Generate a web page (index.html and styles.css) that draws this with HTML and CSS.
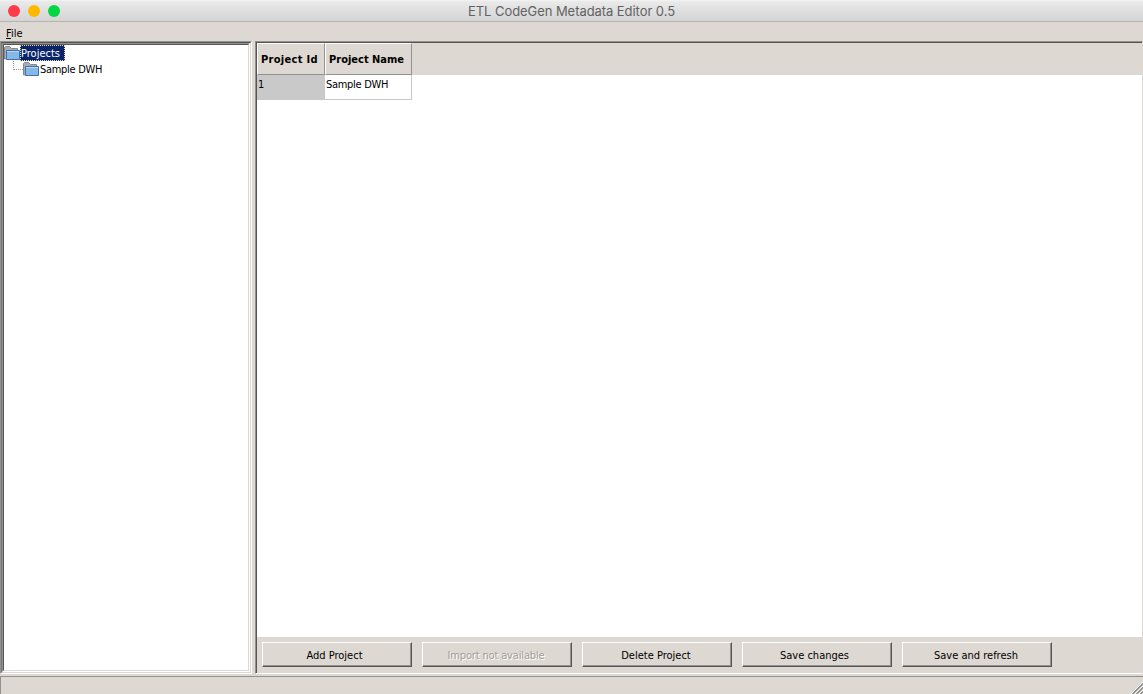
FILE: index.html
```html
<!DOCTYPE html>
<html lang="en">
<head>
<meta charset="utf-8">
<title>ETL CodeGen Metadata Editor 0.5</title>
<link rel="stylesheet" href="styles.css">
</head>
<body>
<div class="window">
  <header class="titlebar">
    <div class="lights"><i class="light close"></i><i class="light minimize"></i><i class="light zoom"></i></div>
    <span class="title">ETL CodeGen Metadata Editor 0.5</span>
  </header>
  <nav class="menubar"><span class="menu"><u>F</u>ile</span></nav>
  <main class="split">
    <aside class="tree">
      <div class="tree-frame">
        <div class="tree-well">
          <div class="tree-inner">
            <div class="node root">
              <svg class="folder" width="16" height="16" viewBox="0 0 16 16"><path d="M.5 14V2.500l1-1h4l2 2h6v9z" fill="#a9adb0" stroke="#85898d"/><path d="M2.500 5.500h13v9h-13z" fill="#86b8e6" stroke="#3c71ad"/><path d="M3 6.500h12" stroke="#b9d9f5"/></svg><span class="label selected">Projects</span>
            </div>
            <div class="node child">
              <svg class="branch" width="10" height="16" viewBox="0 0 10 16"><path d="M.5 0v9M1 8.500h9" fill="none" stroke="#999" stroke-dasharray="1 1"/></svg><svg class="folder" width="16" height="16" viewBox="0 0 16 16"><path d="M.5 14V2.500l1-1h4l2 2h6v9z" fill="#a9adb0" stroke="#85898d"/><path d="M2.500 5.500h13v9h-13z" fill="#86b8e6" stroke="#3c71ad"/><path d="M3 6.500h12" stroke="#b9d9f5"/></svg><span class="label sample">Sample DWH</span>
            </div>
          </div>
        </div>
      </div>
    </aside>
    <section class="panel">
      <div class="grid">
        <div class="head-row"><div class="th id">Project Id</div><div class="th name">Project Name</div></div>
        <div class="row"><div class="td id">1</div><div class="td name">Sample DWH</div></div>
      </div>
      <div class="actions">
        <button class="btn add">Add Project</button>
        <button class="btn import" disabled>Import not available</button>
        <button class="btn delete">Delete Project</button>
        <button class="btn save">Save changes</button>
        <button class="btn refresh">Save and refresh</button>
      </div>
    </section>
  </main>
  <footer class="statusbar"><svg class="grip" width="12" height="12" viewBox="0 0 12 12"><path d="M0 12 12 0M4 12l8-8M8 12l4-4" stroke="#fff" stroke-width="1"/><path d="M1.500 12 12 1.500M5.500 12 12 5.500M9.500 12 12 9.500" stroke="#888" stroke-width="1.400"/></svg></footer>
</div>
</body>
</html>
```
FILE: styles.css
```css
* { box-sizing: border-box; }
body { margin: 0; background: #ddd8d2; }
.window { width: 1143px; height: 694px; display: flex; flex-direction: column; overflow: hidden; background: #ddd8d2; color: #000; font: 11px/14px "DejaVu Sans Condensed", "DejaVu Sans", sans-serif; }
.titlebar { height: 22px; display: grid; grid-template-columns: 468px 1fr; align-items: center; background: linear-gradient(#f3f3f3 0, #e9e9e9 2px, #d4d4d4 100%); border-bottom: 1px solid #b5b3b3; }
.lights { display: flex; gap: 8px; padding-left: 8px; }
.light { width: 12px; height: 12px; border-radius: 50%; }
.close { background: #ff3b4a; }
.minimize { background: #ffb800; }
.zoom { background: #00d742; }
.title { font: 13px/18px Inter, sans-serif; color: #626262; letter-spacing: -0.06px; white-space: nowrap; }
.menubar { height: 19px; padding: 5px 6px 0; }
.split { height: 633px; display: flex; }
.tree { width: 252px; border: 1px solid; border-color: #929292 #fff #fff #929292; }
.tree-frame { height: 100%; border: 1px solid; border-color: #555 #ddd8d2 #ddd8d2 #777; }
.tree-well { height: 100%; border: 1px solid; border-color: #929292 #fff #fff #929292; }
.tree-inner { height: 100%; border: 1px solid; border-color: #555 #ddd8d2 #ddd8d2 #555; background: #fff; }
.node { height: 16px; display: flex; align-items: center; }
.child { padding-left: 9px; }
.folder { flex: none; }
.label { white-space: nowrap; line-height: 16px; padding-top: 1px; }
.sample { padding-left: 1px; letter-spacing: -0.3px; }
.selected { width: 45px; height: 16px; padding-left: 1px; color: #fff; background: #0a246a; outline: 1px dotted #f5db95; outline-offset: -1px; }
.panel { width: 888px; margin-left: 3px; border: 1px solid; border-color: #929292 #ddd8d2 #fff #929292; display: flex; flex-direction: column; }
.grid { height: 595px; background: #fff; border-top: 1px solid #555; border-left: 1px solid #555; }
.head-row { height: 32px; display: flex; background: #ddd8d2; }
.th { height: 32px; padding: 9px 3px 0; border: 1px solid; border-color: #fff #929292 #929292 #fff; font-weight: bold; white-space: nowrap; }
.th.id { letter-spacing: 0.3px; }
.id { width: 68px; }
.name { width: 87px; }
.row { display: flex; height: 25px; }
.td { padding: 3px 1px; border: 0 solid #c9c9c9; border-width: 0 1px 1px 0; white-space: nowrap; }
.td.name { letter-spacing: -0.3px; }
.td.id { background: #c9c9c9; }
.actions { flex: 1; display: flex; gap: 10px; padding: 5px 0 0 5px; border-left: 1px solid #555; }
.btn { width: 150px; height: 25px; padding: 2px 5px 0 0; color: #000; background: #ddd8d2; border: 1px solid; border-color: #fff #555 #555 #fff; box-shadow: inset -1px -1px #929292; font: inherit; }
.import, .delete, .refresh { padding-right: 2px; }
.import { letter-spacing: -0.15px; }
.btn:disabled { color: #a09d99; text-shadow: 1px 1px #fff; }
.statusbar { flex: 1; margin-top: 2px; border-top: 1px solid #929292; border-left: 1px solid #929292; display: flex; justify-content: flex-end; align-items: flex-end; }
```
